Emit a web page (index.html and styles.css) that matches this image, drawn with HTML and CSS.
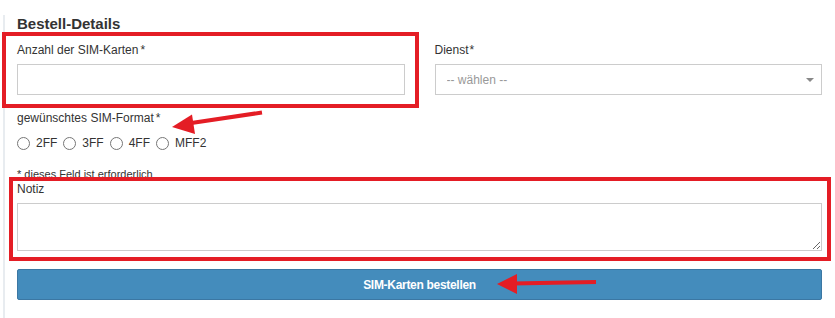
FILE: index.html
```html
<!DOCTYPE html>
<html>
<head>
  <title>Bestell-Details</title>
  <link rel="stylesheet" href="styles.css">
</head>
<body>
  <div class="panel">
    <h2 class="section-title">Bestell-Details</h2>

    <div class="form-row">
      <div class="form-group highlight highlight-count">
        <label class="field-label" for="count">Anzahl der SIM-Karten<span class="req">*</span></label>
        <input type="text" id="count" class="field-input">
      </div>
      <div class="form-group service-group">
        <label class="field-label" for="service">Dienst<span class="req req-tight">*</span></label>
        <div class="select-wrap">
          <select id="service" class="field-input field-select">
            <option>-- wählen --</option>
          </select>
        </div>
      </div>
    </div>

    <div class="format-group">
      <p class="field-label">gewünschtes SIM-Format<span class="req">*</span></p>
      <div class="radio-row">
        <label class="radio-option"><input type="radio" name="format">2FF</label>
        <label class="radio-option"><input type="radio" name="format">3FF</label>
        <label class="radio-option"><input type="radio" name="format">4FF</label>
        <label class="radio-option"><input type="radio" name="format">MFF2</label>
      </div>
    </div>

    <p class="required-note">* dieses Feld ist erforderlich</p>

    <div class="form-group highlight highlight-note">
      <label class="field-label" for="note">Notiz</label>
      <textarea id="note" class="field-input field-textarea"></textarea>
    </div>

    <button class="submit-button">SIM-Karten bestellen</button>
  </div>

  <!-- red annotation arrows drawn over the form -->
  <svg class="annotations" width="835" height="318" viewBox="0 0 835 318">
    <line x1="262" y1="112.5" x2="188" y2="123.5" stroke="#e41d25" stroke-width="4"/>
    <polygon points="172,127 192,114.5 195,134" fill="#e41d25"/>
    <line x1="596" y1="282" x2="512" y2="283.5" stroke="#e41d25" stroke-width="4"/>
    <polygon points="497,284 517,274 517,294" fill="#e41d25"/>
  </svg>
</body>
</html>
```

FILE: styles.css
```css
body {
  margin: 0;
  background-color: #FFF;
  font-family: "Liberation Sans", Arial, sans-serif;
  color: #333;
  position: relative;
}

.panel {
  margin-left: 3px;
  border-left: 2px solid #e8ecf0;
  padding: 0 13px 19px 12px;
}

.section-title {
  margin: 15px 0 0;
  font-size: 15px;
  line-height: 18px;
  font-weight: bold;
  color: #333;
}

.form-row {
  display: grid;
  grid-template-columns: 1fr 1fr;
  column-gap: 30px;
}

.field-label {
  display: block;
  margin: 0;
  font-size: 12px;
  line-height: 16px;
  color: #333;
}

.req {
  margin-left: 2px;
}

.req-tight {
  margin-left: 1px;
}

.field-input {
  display: block;
  box-sizing: border-box;
  width: 100%;
  height: 31px;
  margin-top: 6px;
  border: 1px solid #ccc;
  border-radius: 0;
  background-color: #FFF;
  font-family: inherit;
  font-size: 12px;
  color: #333;
  outline: none;
}

.highlight {
  position: relative;
  border: 4px solid #e41d25;
}

.highlight-count {
  margin: -1px -14px -13px -15px;
  padding: 6px 10px 9px 11px;
}

.service-group {
  padding-top: 9px;
}

.select-wrap {
  position: relative;
}

.field-select {
  appearance: none;
  -webkit-appearance: none;
  padding: 0 24px 0 11px;
  color: #999;
}

.select-wrap::after {
  content: "";
  position: absolute;
  right: 8px;
  top: 14px;
  border-left: 4px solid transparent;
  border-right: 4px solid transparent;
  border-top: 4px solid #888;
}

.format-group {
  margin-top: 15px;
}

.radio-row {
  display: flex;
  align-items: center;
  gap: 6px;
  margin-top: 9px;
  height: 16px;
}

.radio-option {
  display: flex;
  align-items: center;
  font-size: 12px;
  line-height: 16px;
  color: #333;
}

.radio-option input {
  width: 13px;
  height: 13px;
  margin: 0 6px 0 0;
}

.required-note {
  margin: 16px 0 0;
  font-size: 11px;
  line-height: 14px;
  color: #333;
}

.highlight-note {
  margin: -4px -9px 0 -8px;
  padding: 0 5px 6px 4px;
}

.field-textarea {
  height: 48px;
  resize: both;
}

.submit-button {
  display: block;
  width: 100%;
  height: 31px;
  margin-top: 8px;
  border: 1px solid #3b77a3;
  border-radius: 2px;
  background-color: #448cbc;
  color: #FFF;
  font-family: inherit;
  font-size: 12px;
  font-weight: bold;
  letter-spacing: -0.3px;
  cursor: pointer;
}

.annotations {
  position: absolute;
  top: 0;
  left: 0;
  pointer-events: none;
}
```
